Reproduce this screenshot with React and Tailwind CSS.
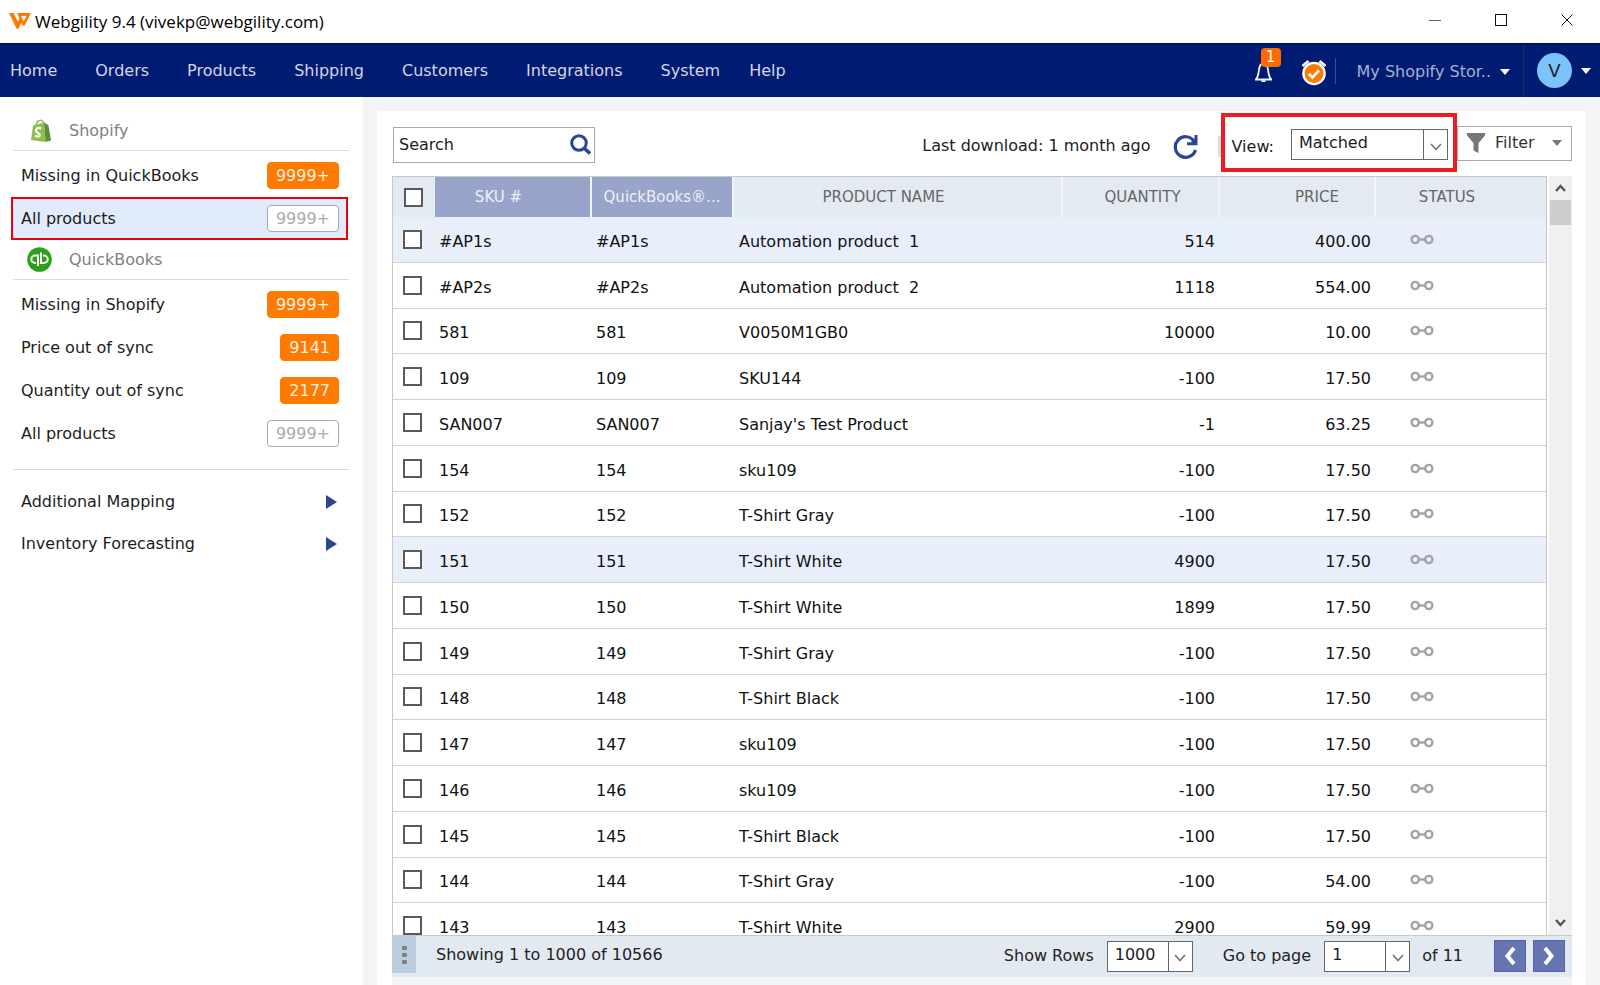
import React from "react";

const navItems = ["Home", "Orders", "Products", "Shipping", "Customers", "Integrations", "System", "Help"];

const rows = [
  ["#AP1s", "Automation product\u00a0 1", "514", "400.00", true],
  ["#AP2s", "Automation product\u00a0 2", "1118", "554.00"],
  ["581", "V0050M1GB0", "10000", "10.00"],
  ["109", "SKU144", "-100", "17.50"],
  ["SAN007", "Sanjay's Test Product", "-1", "63.25"],
  ["154", "sku109", "-100", "17.50"],
  ["152", "T-Shirt Gray", "-100", "17.50"],
  ["151", "T-Shirt White", "4900", "17.50", true],
  ["150", "T-Shirt White", "1899", "17.50"],
  ["149", "T-Shirt Gray", "-100", "17.50"],
  ["148", "T-Shirt Black", "-100", "17.50"],
  ["147", "sku109", "-100", "17.50"],
  ["146", "sku109", "-100", "17.50"],
  ["145", "T-Shirt Black", "-100", "17.50"],
  ["144", "T-Shirt Gray", "-100", "54.00"],
  ["143", "T-Shirt White", "2900", "59.99"],
];

function TitleBar() {
  return (
    <header className="flex h-[43px] shrink-0 items-center bg-white pl-[9px] text-black">
      <svg className="-mt-[2px]" width="22" height="16" viewBox="0 0 22 16" aria-hidden="true">
        <path
          d="M0 0h4.600l4.200 8.800 1.700-3.300L8 0h14l-6.300 12.600h-2.200L12.300 10 9.500 15.800H7.600zM12 3l2.700 5.600L17.500 3z"
          fill="#ff7a00"
          fillRule="evenodd"
        />
      </svg>
      <h1 className="ml-[4px] flex-1 font-['Open_Sans',sans-serif] text-[17px] leading-6">
        Webgility 9.4 (vivekp@webgility.com)
      </h1>
      <button aria-label="Minimize" className="flex h-full w-[66px] items-center justify-center pb-[3px]">
        <svg width="12" height="12" viewBox="0 0 12 12"><path d="M0 6.500h12" stroke="#666" /></svg>
      </button>
      <button aria-label="Maximize" className="flex h-full w-[66px] items-center justify-center pb-[3px]">
        <svg width="12" height="12" viewBox="0 0 12 12"><rect x=".5" y=".5" width="11" height="11" fill="none" stroke="#111" /></svg>
      </button>
      <button aria-label="Close" className="flex h-full w-[66px] items-center justify-center pb-[3px]">
        <svg width="12" height="12" viewBox="0 0 12 12"><path d="M.5.5l11 11M11.500.5l-11 11" stroke="#111" /></svg>
      </button>
    </header>
  );
}

function Caret({ className }) {
  return (
    <svg className={className} width="10" height="6" viewBox="0 0 10 6" aria-hidden="true">
      <path d="M0 0h10L5 6z" fill="currentColor" />
    </svg>
  );
}

function NavBar() {
  return (
    <nav className="flex h-[54px] shrink-0 items-center border-t border-[#000c48] bg-[#001c72] pl-[10px] text-[#d3d6e2]">
      <ul className="flex flex-1 gap-[38px]">
        {navItems.map((item) => (
          <li key={item} className="last:-ml-[9px]">
            <a href="#">{item}</a>
          </li>
        ))}
      </ul>
      <button aria-label="Notifications" className="relative mr-[28px] h-[22px] w-[19px]">
        <svg width="19" height="22" viewBox="0 0 19 22" fill="none" stroke="#f4f4fa" strokeWidth="1.800">
          <path d="M1 19.500h17M2.200 19c2-2.500 2.300-6 2.800-9.500C5.500 5.500 7 3.500 9.500 3.500s4 2 4.500 6c.5 3.500.8 7 2.800 9.500" />
          <path d="M7.500 21.100h4" />
        </svg>
        <span className="absolute -top-[12px] left-[7px] h-[19px] w-[20px] rounded-[4px] bg-[#ff6a00] text-center text-[15px] leading-[19px] text-white">1</span>
      </button>
      <button aria-label="Reminders" className="mr-[8px] pt-[3px]">
        <svg width="26" height="27" viewBox="0 0 26 27" fill="none">
          <path d="M1.500 7L7.500 2M24.500 7L18.500 2" stroke="#fff" strokeWidth="2.800" />
          <circle cx="13" cy="14.500" r="10.600" fill="#ff7a00" stroke="#fff" strokeWidth="2.400" />
          <path d="M7.800 14.800l3.600 3.600 6.600-7" stroke="#fff" strokeWidth="2.800" />
        </svg>
      </button>
      <span className="h-[26px] w-px bg-[#3a4e90]" />
      <button className="ml-[21px] mr-[13px] flex items-center pt-[2px] text-[#a5afd0]">
        My Shopify Stor..
        <Caret className="ml-[9px] text-white" />
      </button>
      <span className="h-full w-px bg-[#1b3060]" />
      <button aria-label="Account" className="ml-[13px] mr-[9px] flex items-center">
        <span className="flex size-[35px] items-center justify-center rounded-full bg-[#7cc3fb] text-[18px] text-[#222]">V</span>
        <Caret className="ml-[9px] text-white" />
      </button>
    </nav>
  );
}

function Badge({ children, muted }) {
  return (
    <span
      className={
        muted
          ? "rounded-[4px] border border-[#a8a8a8] bg-white px-[8px] leading-[25px] text-[#aaa]"
          : "rounded-[4px] border border-[#ff7a00] bg-[#ff7a00] px-[8px] leading-[25px] text-[#fff0e0]"
      }
    >
      {children}
    </span>
  );
}

function SideRow({ label, count, muted, selected }) {
  return (
    <li>
      <a
        href="#"
        className={
          selected
            ? "flex h-[43px] items-center justify-between border-2 border-[#e8000b] bg-[#e1ebfb] pl-[8px] pr-[7px]"
            : "flex h-[43px] items-center justify-between pl-[10px] pr-[9px]"
        }
      >
        {label}
        <Badge muted={muted}>{count}</Badge>
      </a>
    </li>
  );
}

function Sidebar() {
  return (
    <aside className="w-[363px] shrink-0 bg-white pl-[11px] pr-[14px] text-[#1c1c1c]">
      <h2 className="ml-[2px] flex h-[54px] items-center border-b border-[#dcdcdc] pl-[18px] pt-[14px] text-[#808080]">
        <svg className="mr-[18px]" width="20" height="24" viewBox="0 0 20 24" aria-hidden="true">
          <path d="M5 7C5.500 3.500 7.500 1.300 9.500 1.300S13 3.500 13 6" fill="none" stroke="#8fb74a" strokeWidth="1.600" />
          <path d="M2 6.500l11-3 1.500 19.500L0 21z" fill="#8fc04c" />
          <path d="M13 3.500l4.500 2.700L20 21.500 14.500 23z" fill="#5d8f3a" />
          <path d="M10 9.500C8 8.300 5 9 5 11.500c0 2.500 4 2.500 3.800 4.700C8.700 18 6 18 4.200 16.700" fill="none" stroke="#fff" strokeWidth="2.200" />
        </svg>
        Shopify
      </h2>
      <ul className="pr-px pt-[3px]">
        <SideRow label="Missing in QuickBooks" count="9999+" />
        <SideRow label="All products" count="9999+" muted selected />
      </ul>
      <h2 className="ml-[2px] flex h-[40px] items-center border-b border-[#dcdcdc] pl-[14px] text-[#808080]">
        <svg className="mr-[17px]" width="25" height="25" viewBox="0 0 25 25" fill="none" aria-hidden="true">
          <circle cx="12.500" cy="12.500" r="12.300" fill="#2ca01c" />
          <path d="M11 19V8.500H8a3.700 3.700 0 0 0 0 7.400h1M14 5.500v10.400h3a3.700 3.700 0 0 0 0-7.400h-1" stroke="#fff" strokeWidth="2" />
        </svg>
        QuickBooks
      </h2>
      <ul className="pb-[14px] pr-px pt-[3px]">
        <SideRow label="Missing in Shopify" count="9999+" />
        <SideRow label="Price out of sync" count="9141" />
        <SideRow label="Quantity out of sync" count="2177" />
        <SideRow label="All products" count="9999+" muted />
      </ul>
      <ul className="ml-[2px] border-t border-[#dcdcdc] pt-[11px]">
        {["Additional Mapping", "Inventory Forecasting"].map((label) => (
          <li key={label}>
            <button className="flex h-[42px] w-full items-center justify-between pl-[8px] pr-[12px]">
              {label}
              <svg width="11" height="14" viewBox="0 0 11 14" aria-hidden="true"><path d="M0 0l11 7-11 7z" fill="#2d4494" /></svg>
            </button>
          </li>
        ))}
      </ul>
    </aside>
  );
}

function SelectBox({ id, options, width, label }) {
  return (
    <span className={`grid h-[31px] border border-[#666] bg-white ${width}`}>
      <select
        id={id}
        aria-label={label}
        className="col-start-1 row-start-1 w-full appearance-none bg-transparent pb-[3px] pl-[7px] text-[#1c1c1c] outline-none"
      >
        {options.map((o) => (
          <option key={o}>{o}</option>
        ))}
      </select>
      <span className="pointer-events-none col-start-1 row-start-1 flex w-[24px] items-center justify-center justify-self-end border-l border-[#666] pt-1">
        <svg width="12" height="8" viewBox="0 0 12 8" fill="none" aria-hidden="true">
          <path d="M1 1l5 5.500L11 1" stroke="#777" strokeWidth="1.700" />
        </svg>
      </span>
    </span>
  );
}

function Toolbar() {
  return (
    <div className="flex h-[65px] shrink-0 items-center pr-[14px]">
      <div className="flex flex-1 items-center justify-between pl-px pt-[3px]">
        <label className="flex h-[36px] w-[202px] items-center border border-[#a8a8a8] bg-white pl-[5px] pr-[3px]">
          <input
            type="text"
            aria-label="Search"
            placeholder="Search"
            className="min-w-0 flex-1 outline-none placeholder:text-[#1c1c1c]"
          />
          <svg className="-mt-[2px]" width="21" height="21" viewBox="0 0 21 21" fill="none" stroke="#2d4494" aria-hidden="true">
            <circle cx="9" cy="9" r="7.300" strokeWidth="3" />
            <path d="M14 14l6 5.500" strokeWidth="3.600" />
          </svg>
        </label>
        <div className="flex items-center pt-[2px] text-[#1c1c1c]">
          Last download: 1 month ago
          <button aria-label="Refresh" className="ml-[22px]">
            <svg width="25" height="25" viewBox="0 0 25 25" fill="none" aria-hidden="true">
              <path d="M22.500 16a10.300 10.300 0 1 1-1.500-9" stroke="#2d4494" strokeWidth="3.200" />
              <path d="M23 1v8.800h-9" stroke="#2d4494" strokeWidth="3" />
              <path d="M18.500 5.500l4.500 0v4.500h-4.500z" fill="#2d4494" />
            </svg>
          </button>
          <span className="ml-[20px] h-[21px] w-[3px] bg-[#dcdcdc]" />
        </div>
      </div>
      <div className="-mt-[2px] flex h-[59px] items-center border-4 border-[#ed1c24] pl-[7px] pr-[5px] text-[#1c1c1c]">
        <label htmlFor="view" className="mr-[17px] pt-[8px]">View:</label>
        <span className="pt-[4px]">
          <SelectBox id="view" options={["Matched"]} width="w-[157px]" />
        </span>
      </div>
      <button className="-mt-[1px] flex h-[35px] w-[115px] items-center border border-[#a8a8a8] pl-[9px] text-[#333]">
        <svg width="18" height="20" viewBox="0 0 18 20" aria-hidden="true"><path d="M0 0h18v2.500L11.500 10v10L6.500 17.500V10L0 2.500z" fill="#777" /></svg>
        <span className="ml-[10px]">Filter</span>
        <Caret className="ml-[17px] text-[#777]" />
      </button>
    </div>
  );
}

function ChainIcon() {
  return (
    <svg width="25" height="11" viewBox="0 0 25 11" fill="none" stroke="#a3a3a3" strokeWidth="2.400" role="img" aria-label="Linked">
      <circle cx="5.200" cy="5.500" r="3.600" />
      <circle cx="18.800" cy="5.500" r="3.600" />
      <path d="M9 5.500h6" />
    </svg>
  );
}

const boxClass = "block size-[19px] appearance-none border-2 border-[#5a5a5a] bg-white checked:bg-[#2d4494]";

function ProductTable() {
  const th = "border-r-2 border-[#f3f6f9] p-0 text-center font-normal";
  return (
    <div className="min-w-0 flex-1 overflow-hidden border-x border-t border-[#c8c8c8]">
      <table className="h-[772px] w-full table-fixed border-separate border-spacing-0">
        <colgroup>
          <col className="w-[42px]" />
          <col className="w-[157px]" />
          <col className="w-[142px]" />
          <col />
          <col className="w-[157px]" />
          <col className="w-[156px]" />
          <col className="w-[170px]" />
        </colgroup>
        <thead className="text-[15px] text-[#666]">
          <tr className="h-[40px] bg-[#e3eaf1]">
            <th className="p-0 pl-[11px] pt-px"><input type="checkbox" aria-label="Select all" className={boxClass} /></th>
            <th className="border-r-2 border-[#f3f6f9] bg-[#98a4c9] p-0 pr-7 text-center font-normal text-[#eef0f7]">SKU #</th>
            <th className="border-r-2 border-[#f3f6f9] bg-[#98a4c9] p-0 text-center font-normal text-[#eef0f7]">QuickBooks®...</th>
            <th className={`${th} pr-7`}>PRODUCT NAME</th>
            <th className={`${th} pl-1`}>QUANTITY</th>
            <th className={`${th} pl-10`}>PRICE</th>
            <th className="p-0 pr-7 text-center font-normal">STATUS</th>
          </tr>
        </thead>
        <tbody className="text-[#111] [&_td]:border-b [&_td]:border-[#d4d4d4] [&_td]:p-0">
          {rows.map(([sku, name, qty, price, active]) => (
            <tr key={sku} className={active ? "bg-[#e8effa]" : "bg-white"}>
              <td><input type="checkbox" aria-label={`Select ${sku}`} className={`ml-[10px] ${boxClass}`} /></td>
              <td><div className="pl-[4px] pt-[5px]">{sku}</div></td>
              <td><div className="pl-[4px] pt-[5px]">{sku}</div></td>
              <td><div className="pl-[5px] pt-[5px]">{name}</div></td>
              <td><div className="pr-[5px] pt-[5px] text-right">{qty}</div></td>
              <td><div className="pr-[5px] pt-[5px] text-right">{price}</div></td>
              <td><div className="pl-[34px]"><ChainIcon /></div></td>
            </tr>
          ))}
        </tbody>
      </table>
    </div>
  );
}

function ScrollBar() {
  return (
    <div className="ml-[2px] flex w-[23px] flex-col items-center bg-[#f0f0f0]">
      <button aria-label="Scroll up" className="flex h-[24px] w-full items-center justify-center">
        <svg width="11" height="8" viewBox="0 0 11 8" fill="none"><path d="M1 7l4.500-5L10 7" stroke="#555" strokeWidth="2.400" /></svg>
      </button>
      <div className="h-[25px] w-[21px] bg-[#cdcdcd]" />
      <div className="flex-1" />
      <button aria-label="Scroll down" className="flex h-[24px] w-full items-center justify-center">
        <svg width="11" height="8" viewBox="0 0 11 8" fill="none"><path d="M1 1l4.500 5L10 1" stroke="#555" strokeWidth="2.400" /></svg>
      </button>
    </div>
  );
}

function Pager({ label, path }) {
  return (
    <button aria-label={label} className="flex h-[32px] w-[32px] items-center justify-center border border-[#5560b8] bg-[#6674b0]">
      <svg width="14" height="20" viewBox="0 0 14 20" fill="none"><path d={path} stroke="#fff" strokeWidth="4" /></svg>
    </button>
  );
}

function Footer() {
  return (
    <div className="mr-[14px] flex h-[42px] shrink-0 items-start border-t border-[#c8c8c8] bg-[#e3e9f1] text-[#222]">
      <button aria-label="Options" className="flex h-[37px] w-[24px] items-center justify-center bg-[#bccde0]">
        <svg width="5" height="18" viewBox="0 0 5 18" fill="#808080"><rect width="5" height="4" rx="1" /><rect y="7" width="5" height="4" rx="1" /><rect y="14" width="5" height="4" rx="1" /></svg>
      </button>
      <p className="ml-[20px] flex-1 leading-[38px]">Showing 1 to 1000 of 10566</p>
      <div className="flex h-[40px] items-center">
        <label htmlFor="show-rows" className="mr-[13px]">Show Rows</label>
        <SelectBox id="show-rows" options={["1000"]} width="w-[86px]" />
        <label htmlFor="page" className="ml-[30px] mr-[13px]">Go to page</label>
        <SelectBox id="page" options={["1"]} width="w-[86px]" />
        <span className="ml-[12px] mr-[31px]">of 11</span>
        <Pager label="Previous page" path="M11 2L4.500 10l6.500 8" />
        <span className="w-[7px]" />
        <Pager label="Next page" path="M3 2l6.500 8L3 18" />
        <span className="w-[7px]" />
      </div>
    </div>
  );
}

export default function App() {
  return (
    <div className="flex h-screen flex-col bg-white font-['DejaVu_Sans',sans-serif] text-[16px] leading-[20px]">
      <TitleBar />
      <NavBar />
      <div className="flex min-h-0 flex-1 bg-[#f3f4f6]">
        <Sidebar />
        <main className="ml-[14px] mr-[14px] mt-[14px] flex min-w-0 flex-1 flex-col bg-white pl-[15px]">
          <Toolbar />
          <div className="mr-[14px] flex min-h-0 flex-1">
            <ProductTable />
            <ScrollBar />
          </div>
          <Footer />
          <div className="mr-[14px] h-2 shrink-0 bg-[#f3f4f6]" />
        </main>
      </div>
    </div>
  );
}
